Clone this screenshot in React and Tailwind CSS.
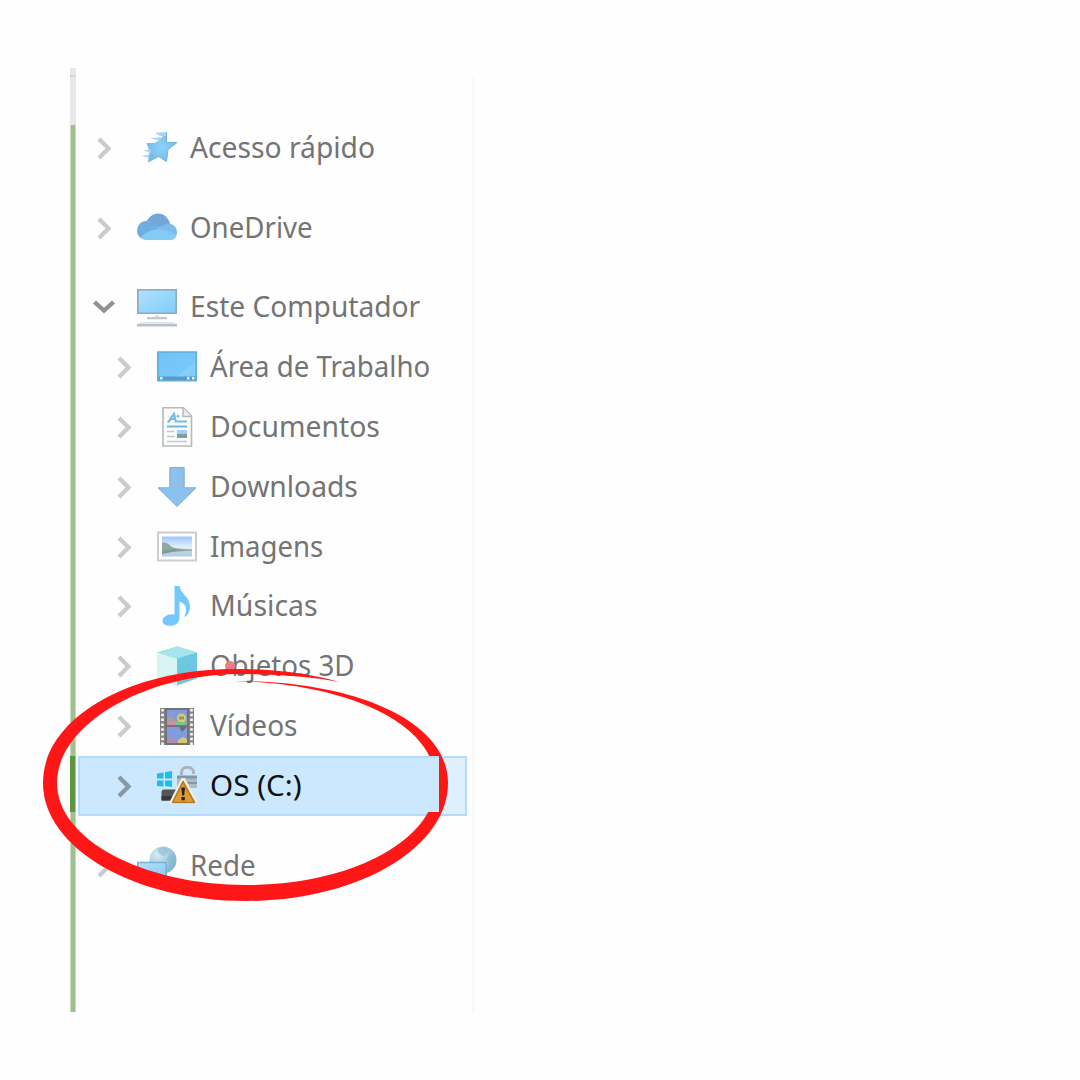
import React, { useLayoutEffect, useRef } from "react";

const Star = () => (
  <svg viewBox="0 0 40 40" className="size-10">
    <defs><radialGradient id="st"><stop stopColor="#8bd1fa" /><stop offset="1" stopColor="#76bde9" /></radialGradient></defs>
    <path d="M29.500 4v10.500h10.500l-9 7-1.500 12-8-5L11 34l1.500-10.500-3-8.500h8l5.500-3.500z" fill="url(#st)" />
    <path d="M18 4.800l12-.8v4H23zM13 10.500l11-1.500-1 3.500zM6 22.500l8-1v3zM4.500 28l8-1.500-1 3z" fill="#a5d7f5" />
    <path d="M29.500 4v10.500h10.500l-9 7-1.500 12-8-5L11 34" fill="none" stroke="#72b4db" strokeWidth="1" />
  </svg>
);

const Cloud = () => (
  <svg viewBox="0 0 40 40" className="size-10">
    <path d="M8 17C11 9 16 5.500 21 5.500c6 0 10 4 12 10l-4 7H9z" fill="#75a5d6" />
    <path d="M9 13c6 0 9 3 23 12v6H8c-5 0-8-4-8-8s3-10 9-10z" fill="#70aee2" />
    <path d="M21 19l10-3.500c5 0 9 4 9 8.500 0 5-3 8-7 8H14z" fill="#7cbcec" />
    <path d="M4 29c5-5 13-8.500 20-7.500 6 .500 12 3.500 15 6-1 3-3 4.500-6 4.500H9c-2 0-4-1-5-3z" fill="#83cbf2" />
  </svg>
);

const Computer = () => (
  <svg viewBox="0 0 40 40" className="size-10">
    <defs><linearGradient id="pc" x2="1" y2="1"><stop stopColor="#b5e0fc" /><stop offset=".5" stopColor="#99d6fc" /><stop offset="1" stopColor="#83ccfb" /></linearGradient></defs>
    <path d="M.800 2.800h38.400v23.400H.800z" fill="url(#pc)" stroke="#8aaabd" strokeWidth="1.600" />
    <path d="M18 28h4v2.500h-4z" fill="#dce2e6" />
    <path d="M10 30h20v2.300H10z" fill="#c1cad1" />
    <path d="M4 35h32l4 2.500H0z" fill="#e1e5e8" />
    <path d="M0 37h40v2.500H0z" fill="#b8c1ca" />
  </svg>
);

const Desktop = () => (
  <svg viewBox="0 0 40 40" className="size-10">
    <defs><linearGradient id="dk" x2="1" y2="1"><stop stopColor="#70c2f5" /><stop offset=".65" stopColor="#78c8fc" /><stop offset=".68" stopColor="#88cffb" /><stop offset="1" stopColor="#7cc9f9" /></linearGradient></defs>
    <path d="M.800 5h38.400v28.800H.800z" fill="url(#dk)" stroke="#62addb" strokeWidth="1.600" />
    <path d="M1.500 29.500h37v3.500h-37z" fill="#569bc5" />
    <path d="M3 30h2.500v2.500H3zM30 30h2.500v2.500H30zM35 30h2.500v2.500H35z" fill="#e7f5fc" />
  </svg>
);

const Documents = () => (
  <svg viewBox="0 0 40 40" className="size-10">
    <path d="M6 .800h20.500L34.500 9v30H6z" fill="#fbfcfc" stroke="#b7b9ba" strokeWidth="1.600" />
    <path d="M26 1v8.500h8.500" fill="#e9ebec" stroke="#b7b9ba" strokeWidth="1.500" />
    <path d="M11 15.500l6-8.500 2 8.500M13.500 12h5M20 8.500l2 1.500M20 14.500h10" fill="none" stroke="#76bde5" strokeWidth="2.200" />
    <path d="M10 19.500h20" stroke="#69b8e4" strokeWidth="2" />
    <path d="M10 24.500h7.500M10 29.500h7.500M10 34.500h20" stroke="#c4c8c9" strokeWidth="1.500" />
    <path d="M20 23h10v4H20z" fill="#a5caff" /><path d="M20 27h10v4H20z" fill="#7d9f9e" />
  </svg>
);

const Download = () => (
  <svg viewBox="0 0 40 40" className="size-10">
    <path d="M12.800.500h14.400v20.300H39L20 39.500 1 20.800h11.800z" fill="#8bc1ec" stroke="#7caed8" strokeWidth="1" />
  </svg>
);

const Pictures = () => (
  <svg viewBox="0 0 40 40" className="size-10">
    <defs><linearGradient id="sky" x2="0" y2="1"><stop stopColor="#a2c5fb" /><stop offset=".55" stopColor="#e5f1fa" /><stop offset=".75" stopColor="#bed6df" /><stop offset="1" stopColor="#b0c9ea" /></linearGradient></defs>
    <path d="M1 5.500h38v28H1z" fill="#fff" stroke="#cdcdcd" strokeWidth="2" />
    <path d="M5 9.500h30v20H5z" fill="url(#sky)" />
    <path d="M5 15.500c4-.500 7 1.500 10 4.500 5 2 12 2 20 2.500v1.500c-8 0-15 .500-30 2.500z" fill="#8daaa0" />
    <path d="M5 24l12-2 6 1-18 4z" fill="#7b9b98" />
  </svg>
);

const Music = () => (
  <svg viewBox="0 0 40 40" className="size-10">
    <path d="M17.500 0h5c1 8 10 10.500 10.500 20 0 4-1.500 8-4.500 11l-1-1c2.500-5 3-11.500-5-14.500V32c0 5-4.500 7.800-9 7.800-5 0-8-2-8-5 0-4 6-7.500 12-6.300z" fill="#75c8fc" />
  </svg>
);

const Cube = () => (
  <svg viewBox="0 0 40 40" className="size-10">
    <defs><linearGradient id="cb" y2="1"><stop stopColor="#8edce8" /><stop offset=".5" stopColor="#68cae0" /><stop offset="1" stopColor="#79bfe5" /></linearGradient></defs>
    <path d="M0 6.500L20 .500l20 6v26l-20 7-20-7z" fill="url(#cb)" />
    <path d="M0 6.500l20 6v27l-20-7z" fill="#daf3f3" />
    <path d="M0 6.500L20 .500l20 6-20 6z" fill="#a5e5eb" />
  </svg>
);

const Video = () => (
  <svg viewBox="0 0 40 40" className="size-10">
    <path d="M3 2h34v37H3z" fill="#858585" />
    <path d="M5.500 3v36M34.500 3v36" stroke="#fafafa" strokeWidth="2.600" strokeDasharray="2.500 2.300" />
    <path d="M10 4h20v15H10zM10 21h20v16.500H10z" fill="#819bdc" />
    <path d="M10 14c3-5 6-4 8 0l12-1v6H10z" fill="#a39f9c" /><path d="M10 15h8v4h-8z" fill="#d08ca2" />
    <circle cx="24.500" cy="12" r="4.500" fill="#d6cc74" /><path d="M22 10.500h5v3h-5z" fill="#9a995b" />
    <path d="M18 16h10v3H18z" fill="#74c996" />
    <path d="M22 21h8l-5 5z" fill="#696b83" /><path d="M10 31h8l3 6.500H10z" fill="#a98fb9" /><path d="M21 34l5-3 4 2v4.500h-9z" fill="#d9c773" />
    <path d="M9 2v37M31 2v37M9 20h22M9 3h22M9 38h22" stroke="#737373" strokeWidth="2" />
  </svg>
);

const Drive = () => (
  <svg viewBox="0 0 40 40" className="size-10">
    <path d="M0 7.500L6.500 6.500v6H0zM8 6.300L15 5v7.500H8zM0 14.500h6.500v6L0 20zM8 14.500h7V21l-7-1z" fill="#1dbcee" />
    <path d="M4.500 25.500L6 23.500h13v11H4.500z" fill="#555" /><path d="M4.500 30h14v4.500h-14z" fill="#373b3e" />
    <path d="M24.500 9V6.500c0-7 12-7 12 0V8" fill="none" stroke="#acb3b8" strokeWidth="3" />
    <path d="M20 10h20v12H20z" fill="#b3b9be" /><path d="M20 9.500h20v3H20zM30 16h10v2H30z" fill="#7f98aa" />
    <path d="M24.500 12h3.500l11.500 22.500v3.500H13v-3z" fill="#f5efe4" />
    <path d="M26 15.500L15.500 36.500h22z" fill="#dc9a31" stroke="#b77b28" strokeWidth="1.600" strokeLinejoin="round" />
    <path d="M24.300 21.500h3.700l-.800 8h-2zM24.500 31h3.300v3.300h-3.300z" fill="#241e13" />
  </svg>
);

const Network = () => (
  <svg viewBox="0 0 40 40" className="size-10">
    <defs>
      <radialGradient id="gl" cx=".3" cy=".3" r=".8"><stop stopColor="#d7edf4" /><stop offset=".5" stopColor="#a6cfdf" /><stop offset="1" stopColor="#78b0ca" /></radialGradient>
      <linearGradient id="nt" x2="1" y2="1"><stop stopColor="#b8e0f9" /><stop offset="1" stopColor="#83c7f2" /></linearGradient>
    </defs>
    <circle cx="26" cy="14" r="13.500" fill="url(#gl)" />
    <path d="M21 2l8-1 2 5-5 4-5-3zM32 8l6 3v7l-5 2-3-6z" fill="#82b7ce" opacity=".5" />
    <path d="M.800 16.500h28.400v16.700H.800z" fill="url(#nt)" stroke="#7bb0d3" strokeWidth="1.600" />
  </svg>
);

const groups = [
  [{ label: "Acesso rápido", Icon: Star, width: 184 }],
  [{ label: "OneDrive", Icon: Cloud, width: 122 }],
  [
    { label: "Este Computador", Icon: Computer, width: 229, open: true },
    { label: "Área de Trabalho", Icon: Desktop, width: 219, child: true },
    { label: "Documentos", Icon: Documents, width: 169, child: true },
    { label: "Downloads", Icon: Download, width: 147, child: true },
    { label: "Imagens", Icon: Pictures, width: 112, child: true },
    { label: "Músicas", Icon: Music, width: 107, child: true },
    { label: "Objetos 3D", Icon: Cube, width: 144, child: true },
    { label: "Vídeos", Icon: Video, width: 87, child: true },
    { label: "OS (C:)", Icon: Drive, width: 91, child: true, selected: true },
  ],
  [{ label: "Rede", Icon: Network, width: 65 }],
];

function Label({ text, width, selected }) {
  const ref = useRef(null);
  useLayoutEffect(() => {
    const el = ref.current;
    el.style.transform = `scaleX(${(width + 1) / el.offsetWidth})`;
  }, [width]);
  return (
    <span
      ref={ref}
      className={`mb-[2px] ml-[12.500px] origin-left whitespace-nowrap font-['Noto_Sans','Open_Sans',sans-serif] text-[29px] leading-[40px] ${
        selected ? "text-[#101010]" : "text-[#747474]"
      }`}
    >
      {text}
    </span>
  );
}

function Row({ label, Icon, width, child, open, selected }) {
  return (
    <div
      className={`flex h-[59.8px] w-[389px] items-center ${child ? "pl-[34px]" : "pl-[14px]"} ${
        selected ? "bg-[linear-gradient(to_right,#cce8ff_361px,#dff0fc_361px)] shadow-[inset_0_0_0_2px_#b4dcfa]" : ""
      }`}
    >
      <svg viewBox="0 0 24 24" className="size-6 shrink-0 overflow-visible">
        <path
          d={open ? "M2.500 7l9.500 8.500 9.500-8.500" : "M7 3l9.500 9.500L7 22"}
          fill="none"
          stroke={open ? "#909090" : selected ? "#8799a6" : "#cbcbcb"}
          strokeWidth="4.300"
        />
      </svg>
      <div className="ml-[21px] size-10 shrink-0"><Icon /></div>
      <Label text={label} width={width} selected={selected} />
    </div>
  );
}

export default function App() {
  return (
    <main className="relative h-[1080px] w-[1080px] overflow-hidden bg-[#fefefe] pl-[70px] pt-[68px]">
      <div className="flex h-[944px]">
        <div className="flex w-[6px] shrink-0 flex-col">
          <div className="h-[57px] bg-[#e8e8e8] pt-[7px]"><div className="h-[2px] bg-[#d4d4d4]" /></div>
          <div className="h-[631px] border-x border-[#c5dabb] bg-[#a0c18f]" />
          <div className="h-[56px] border-r border-[#a9c698] bg-[#5d963f]" />
          <div className="flex-1 border-x border-[#c5dabb] bg-[#a0c18f]" />
        </div>
        <nav className="ml-[2px] mt-[9px] flex w-[396px] flex-col gap-[20px] border-r-2 border-[#f8f8f8] pt-[41px]">
          {groups.map((rows, i) => (
            <div key={i}>{rows.map((row) => <Row key={row.label} {...row} />)}</div>
          ))}
        </nav>
      </div>

      {/* Hand-drawn marker ring; the selected row stays in front of its inner edge. */}
      <svg viewBox="0 0 1080 1080" className="pointer-events-none absolute inset-0 size-full">
        <defs>
          <clipPath id="ring">
            <path clipRule="evenodd" d="M0 0H1080V1080H0zM70 756V812H439V756z" />
          </clipPath>
        </defs>
        <circle cx="230" cy="666" r="5" fill="#ee7c82" />
        <path
          clipPath="url(#ring)"
          fill="#ff1717"
          d="M339 682C308 673 272 669 235 669C129 669 43 718 43 783C43 848 134 901 246 901C358 901 448 848 448 783C448 721 356 681 235 681C352 684 436 725 436 783C436 839 353 885 247 885C142 885 57 839 57 783C57 726 140 676 235 674C272 674 308 676 339 682Z"
        />
      </svg>
    </main>
  );
}
